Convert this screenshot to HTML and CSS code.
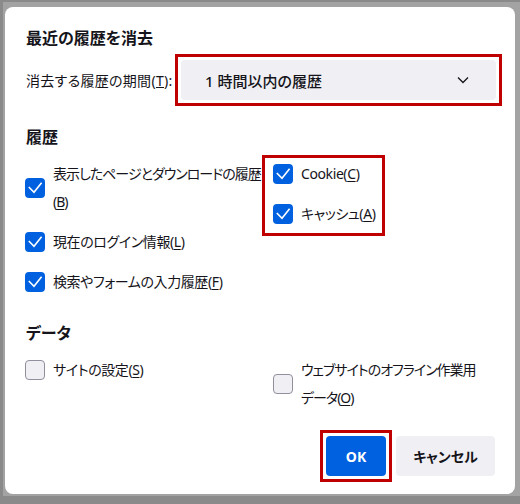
FILE: index.html
```html
<!DOCTYPE html>
<html lang="ja">
<head>
<meta charset="utf-8">
<title>最近の履歴を消去</title>
<link rel="stylesheet" href="styles.css">
</head>
<body>
<div class="dialog">
  <h1 class="title">最近の履歴を消去</h1>
  <div class="range-row">
    <span class="label">消去する履歴の期間(<u>T</u>):</span>
    <div class="select mark">
      <span class="select-text">1 時間以内の履歴</span>
      <svg class="chevron" width="12" height="8" viewBox="0 0 12 8"><path d="M1 1.5 L6 6.5 L11 1.5" fill="none" stroke="#15141a" stroke-width="1.3"/></svg>
    </div>
  </div>

  <h2 class="heading h-history">履歴</h2>
  <div class="grid">
    <div class="col">
      <div class="item">
        <span class="cb on"><svg viewBox="0 0 20 20"><polyline points="3.8,9 9,14.3 16.6,4.8"/></svg></span>
        <span class="text tight">表示したページとダウンロードの履歴<br>(<u>B</u>)</span>
      </div>
      <div class="item">
        <span class="cb on"><svg viewBox="0 0 20 20"><polyline points="3.8,9 9,14.3 16.6,4.8"/></svg></span>
        <span class="text">現在のログイン情報(<u>L</u>)</span>
      </div>
      <div class="item">
        <span class="cb on"><svg viewBox="0 0 20 20"><polyline points="3.8,9 9,14.3 16.6,4.8"/></svg></span>
        <span class="text">検索やフォームの入力履歴(<u>F</u>)</span>
      </div>
    </div>
    <div class="col marked">
      <div class="item">
        <span class="cb on"><svg viewBox="0 0 20 20"><polyline points="3.8,9 9,14.3 16.6,4.8"/></svg></span>
        <span class="text">Cookie(<u>C</u>)</span>
      </div>
      <div class="item">
        <span class="cb on"><svg viewBox="0 0 20 20"><polyline points="3.8,9 9,14.3 16.6,4.8"/></svg></span>
        <span class="text">キャッシュ(<u>A</u>)</span>
      </div>
    </div>
  </div>

  <h2 class="heading h-data">データ</h2>
  <div class="grid">
    <div class="col">
      <div class="item">
        <span class="cb"></span>
        <span class="text">サイトの設定(<u>S</u>)</span>
      </div>
    </div>
    <div class="col">
      <div class="item">
        <span class="cb"></span>
        <span class="text tight">ウェブサイトのオフライン作業用<br>データ(<u>O</u>)</span>
      </div>
    </div>
  </div>

  <div class="buttons">
    <button class="btn primary mark">OK</button>
    <button class="btn cancel">キャンセル</button>
  </div>
</div>
</body>
</html>
```

FILE: styles.css
```css
html {
  background: #8c8c8c;
}
body {
  margin: 0;
  width: 520px;
  height: 504px;
  box-sizing: border-box;
  border-top: 2px solid #8a8a8a;
  border-left: 3px solid #8a8a8a;
  border-bottom: 8px solid #8a8a8a;
  background: #a3a3a3;
  padding: 5px 0 0 2px;
  font-family: "Noto Sans", "Noto Sans CJK JP", sans-serif;
  font-feature-settings: "palt";
  color: #15141a;
  font-size: 14px;
  overflow: hidden;
}
.dialog {
  width: 510px;
  height: 487px;
  box-sizing: border-box;
  background: #fff;
  border-radius: 8px;
  padding: 17px 20px 0 20px;
}
.title {
  margin: 0 0 0 1px;
  font-size: 16px;
  font-weight: 700;
  line-height: 28px;
}
.range-row {
  display: flex;
  align-items: center;
  margin-top: 8px;
  margin-left: 1px;
}
.label {
  white-space: nowrap;
  flex: none;
  width: 155px;
  letter-spacing: 0.3px;
}
.mark {
  position: relative;
}
.mark::after {
  content: "";
  position: absolute;
  left: -6px;
  top: -6px;
  right: -6px;
  bottom: -6px;
  border: 3px solid #c00000;
  pointer-events: none;
}
.select {
  flex: 1;
  height: 40px;
  margin-right: -1px;
  box-sizing: border-box;
  background: #f0f0f4;
  border-radius: 4px;
  display: flex;
  align-items: center;
  justify-content: space-between;
  padding: 0 27px 0 24px;
}
.select-text {
  font-size: 15px;
  font-weight: 500;
}
.chevron {
  display: block;
}
.heading {
  margin: 0 0 0 1px;
  font-size: 16px;
  font-weight: 700;
  line-height: 22px;
}
.h-history {
  margin-top: 26px;
}
.h-data {
  margin-top: 26px;
}
.grid {
  display: grid;
  grid-template-columns: 248px 1fr;
  margin-top: 12px;
}
.col {
  display: flex;
  flex-direction: column;
  gap: 12px;
}
.marked {
  position: relative;
  align-self: start;
}
.marked::after {
  content: "";
  position: absolute;
  left: -11px;
  top: -5px;
  width: 123px;
  height: 81px;
  box-sizing: border-box;
  border: 3px solid #c00000;
  pointer-events: none;
}
.item {
  display: flex;
  align-items: center;
  gap: 8px;
}
.text {
  line-height: 28px;
  white-space: nowrap;
  letter-spacing: -0.4px;
}
.tight {
  letter-spacing: -1px;
}
.text u {
  text-underline-offset: 2px;
}
.cb {
  width: 20px;
  height: 20px;
  flex: none;
  box-sizing: border-box;
  border-radius: 4px;
  background: #f0f0f4;
  border: 1px solid #8f8f9d;
  display: block;
}
.cb.on {
  background: #0061e0;
  border: none;
}
.cb svg {
  display: block;
  width: 20px;
  height: 20px;
}
.cb polyline {
  fill: none;
  stroke: #fff;
  stroke-width: 1.6;
  stroke-linejoin: miter;
}
.buttons {
  display: flex;
  justify-content: flex-end;
  gap: 10px;
  margin-top: 24px;
}
.btn {
  height: 40px;
  padding: 0;
  border: none;
  border-radius: 4px;
  background: #f0f0f4;
  color: #15141a;
  font-family: inherit;
  font-feature-settings: "palt";
  font-size: 14px;
  font-weight: 700;
}
.btn.primary {
  background: #0061e0;
  color: #fff;
  width: 60px;
}
.btn.cancel {
  width: 99px;
}
```
